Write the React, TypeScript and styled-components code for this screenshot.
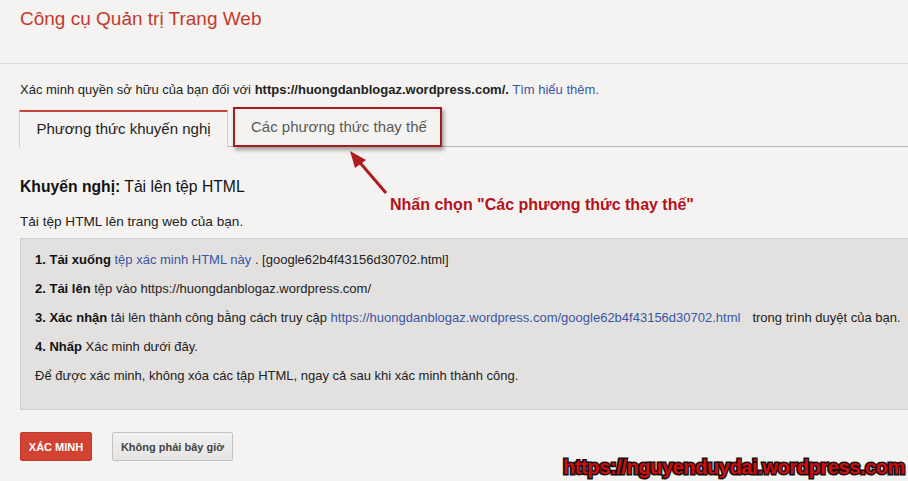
import React from "react";
import styled, { createGlobalStyle } from "styled-components";

const Global = createGlobalStyle`
  html, body { margin: 0; padding: 0; background: #f4f3f2; }
  body { font-family: "Liberation Sans", Arial, sans-serif; color: #222; overflow: hidden; }
`;

const Page = styled.div`
  position: relative;
  width: 908px;
  height: 481px;
  overflow: hidden;
`;

const Header = styled.div`
  height: 63px;
  padding: 0 20px;
  border-bottom: 1px solid #d9d8d7;
`;

const Title = styled.h1`
  margin: 0;
  padding-top: 7px;
  font-size: 19px;
  line-height: 24px;
  font-weight: normal;
  color: #c5392c;
`;

const Content = styled.div`
  padding: 0 0 0 20px;
`;

const Intro = styled.p`
  margin: 18px 0 0;
  font-size: 13px;
  line-height: 16px;
  color: #222;
`;

const Link = styled.a`
  color: #3a55a4;
  text-decoration: none;
`;

const Tabs = styled.div`
  display: flex;
  align-items: flex-end;
  margin-top: 12px;
  margin-left: -1px;
  border-bottom: 1px solid #b8b7b6;
  height: 36px;
`;

const Tab = styled.div<{ $active?: boolean; $highlight?: boolean }>`
  box-sizing: border-box;
  height: ${(p) => (p.$active ? "37px" : "40px")};
  margin-bottom: -1px;
  display: flex;
  align-items: center;
  font-size: 15px;
  color: ${(p) => (p.$active ? "#222" : "#595959")};
  background: #f4f3f2;
  ${(p) =>
    p.$active
      ? `
    width: 209px;
    justify-content: center;
    border-top: 2px solid #c9473a;
    border-left: 1px solid #d0cfce;
    border-right: 1px solid #d0cfce;
    padding-bottom: 3px;
  `
      : ""}
  ${(p) =>
    p.$highlight
      ? `
    width: 209px;
    margin-left: 5px;
    padding-left: 16px;
    border: 2px solid #a81c1f;
    box-shadow: 2px 3px 4px rgba(0,0,0,0.35);
    padding-bottom: 2px;
    position: relative;
    z-index: 1;
  `
      : ""}
`;

const Heading = styled.h2`
  margin: 31px 0 0;
  font-size: 15.7px;
  line-height: 18px;
  font-weight: normal;
  color: #111;
  b { font-weight: bold; }
`;

const Sub = styled.p`
  margin: 18px 0 0;
  font-size: 13.6px;
  line-height: 16px;
  color: #222;
`;

const StepsBox = styled.div`
  margin-top: 8px;
  width: 900px;
  height: 172px;
  box-sizing: border-box;
  background: #e3e1df;
  border: 1px solid #cfcdcb;
  padding: 13px 0 0 14px;
  white-space: nowrap;
`;

const Step = styled.p`
  margin: 0 0 13px;
  font-size: 13px;
  line-height: 16px;
  color: #222;
  b { font-weight: bold; color: #111; }
`;

const Gap = styled.span`
  display: inline-block;
  width: 12px;
`;

const Buttons = styled.div`
  display: flex;
  gap: 20px;
  margin-top: 22px;
`;

const Button = styled.button<{ $primary?: boolean }>`
  box-sizing: border-box;
  height: 29px;
  padding: 0;
  font-family: "Liberation Sans", Arial, sans-serif;
  font-size: 11px;
  font-weight: bold;
  white-space: nowrap;
  border-radius: 2px;
  cursor: pointer;
  ${(p) =>
    p.$primary
      ? `
    color: #fff;
    background: #d14233;
    border: 1px solid #c33a2c;
    width: 72px;
  `
      : `
    color: #444;
    background: linear-gradient(#f1f1f1, #e6e5e4);
    border: 1px solid #c3c2c1;
    width: 121px;
  `}
`;

const Annotation = styled.div`
  position: absolute;
  left: 390px;
  top: 196px;
  font-size: 16px;
  font-weight: bold;
  color: #b4121a;
  white-space: nowrap;
`;

const ArrowSvg = styled.svg`
  position: absolute;
  left: 340px;
  top: 146px;
  overflow: visible;
`;

const Watermark = styled.div`
  position: absolute;
  left: 563px;
  top: 456px;
  font-family: "Liberation Sans", Arial, sans-serif;
  font-size: 20px;
  font-weight: bold;
  letter-spacing: -0.4px;
  color: #d10c0c;
  -webkit-text-stroke: 3px #111;
  paint-order: stroke fill;
  white-space: nowrap;
`;

export default function App() {
  return (
    <Page>
      <Global />
      <Header>
        <Title>Công cụ Quản trị Trang Web</Title>
      </Header>
      <Content>
        <Intro>
          Xác minh quyền sở hữu của bạn đối với{" "}
          <b>https://huongdanblogaz.wordpress.com/.</b>{" "}
          <Link href="#">Tìm hiểu thêm.</Link>
        </Intro>
        <Tabs>
          <Tab $active>Phương thức khuyến nghị</Tab>
          <Tab $highlight>Các phương thức thay thế</Tab>
        </Tabs>
        <Heading>
          <b>Khuyến nghị:</b> Tải lên tệp HTML
        </Heading>
        <Sub>Tải tệp HTML lên trang web của bạn.</Sub>
        <StepsBox>
          <Step>
            <b>1. Tải xuống</b> <Link href="#">tệp xác minh HTML này</Link> .
            [google62b4f43156d30702.html]
          </Step>
          <Step>
            <b>2. Tải lên</b> tệp vào https://huongdanblogaz.wordpress.com/
          </Step>
          <Step>
            <b>3. Xác nhận</b> tải lên thành công bằng cách truy cập{" "}
            <Link href="#">
              https://huongdanblogaz.wordpress.com/google62b4f43156d30702.html
            </Link>
            <Gap />
            trong trình duyệt của bạn.
          </Step>
          <Step>
            <b>4. Nhấp</b> Xác minh dưới đây.
          </Step>
          <Step>
            Để được xác minh, không xóa các tập HTML, ngay cả sau khi xác minh
            thành công.
          </Step>
        </StepsBox>
        <Buttons>
          <Button $primary>XÁC MINH</Button>
          <Button>Không phải bây giờ</Button>
        </Buttons>
      </Content>
      <ArrowSvg width="60" height="60" viewBox="0 0 60 60">
        <line x1="46" y1="47" x2="16" y2="12" stroke="#b01b1f" strokeWidth="3" />
        <polygon points="10,5 26,14 15,22" fill="#b01b1f" />
      </ArrowSvg>
      <Annotation>Nhấn chọn "Các phương thức thay thế"</Annotation>
      <Watermark>https://nguyenduydai.wordpress.com</Watermark>
    </Page>
  );
}
